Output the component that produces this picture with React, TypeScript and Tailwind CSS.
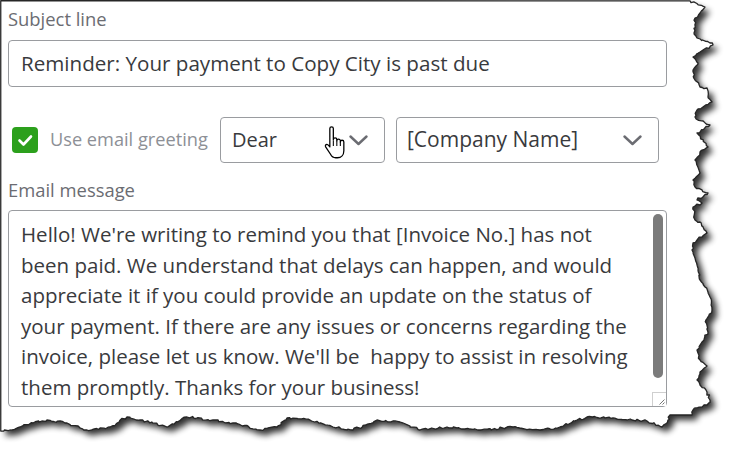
import React from "react";

type P = [number, number];

function makeRng(seed: number) {
  let s = seed;
  return () => {
    s = (s * 16807) % 2147483647;
    return (s - 1) / 2147483646;
  };
}

const rightPts: P[] = [
  [690, 0.75], [705, 7], [700, 13], [695, 18], [694, 33], [697, 38], [710, 43], [713, 45],
  [700, 52], [693, 57], [698, 63], [693, 70], [695, 80], [700, 87], [707, 88], [708, 97],
  [712, 102], [697, 110], [695, 117], [710, 125], [697, 133], [708, 147], [700, 152],
  [695, 160], [700, 173], [693, 180], [695, 187], [708, 193], [697, 200], [702, 203],
  [693, 207], [695, 220], [700, 222], [707, 233], [702, 237], [693, 243], [692, 250],
  [695, 258], [698, 270], [700, 280], [705, 287], [710, 297], [712, 310], [706, 320],
  [708, 332], [702, 342], [697, 350], [700, 360], [707, 366], [700, 372], [697, 380],
  [700, 385], [707, 392], [710, 400], [707, 405], [693, 410], [692, 415],
];

const bottomPts: P[] = [
  [692, 415], [670, 415], [668, 420], [662, 427], [647, 421], [613, 418], [587, 417],
  [577, 420], [560, 427], [540, 430], [513, 427], [480, 430], [447, 427], [420, 430],
  [400, 422], [377, 420], [353, 430], [333, 427], [310, 420], [287, 418], [277, 427],
  [260, 430], [233, 423], [213, 420], [187, 417], [167, 427], [140, 420], [127, 417],
  [110, 427], [87, 430], [67, 423], [47, 420], [33, 423], [20, 427], [10, 430], [0.75, 431],
];

function jagged(points: P[], seed: number) {
  const r = makeRng(seed);
  const out: string[] = [];
  for (let i = 0; i < points.length - 1; i++) {
    const [x1, y1] = points[i];
    const [x2, y2] = points[i + 1];
    const d = Math.hypot(x2 - x1, y2 - y1);
    const n = Math.max(1, Math.ceil(d / 2.5));
    for (let k = 0; k < n; k++) {
      const t = k / n;
      const jx = k === 0 ? 0 : (r() - 0.5) * 2.2;
      const jy = k === 0 ? 0 : (r() - 0.5) * 2.2;
      out.push(`L${(x1 + (x2 - x1) * t + jx).toFixed(1)} ${(y1 + (y2 - y1) * t + jy).toFixed(1)}`);
    }
  }
  const last = points[points.length - 1];
  out.push(`L${last[0]} ${last[1]}`);
  return out.join(" ");
}

const paperPath =
  `M0.75 0.75 ` + jagged(rightPts, 7) + " " + jagged(bottomPts.slice(1), 13) + ` Z`;

function TornPaper() {
  return (
    <svg
      className="absolute inset-0"
      width={736}
      height={461}
      viewBox="0 0 736 461"
    >
      <defs>
        <filter id="tornShadow" x="-10%" y="-10%" width="120%" height="120%">
          <feGaussianBlur stdDeviation="3.4" />
        </filter>
      </defs>
      <path d={paperPath} fill="#000" opacity={0.8} transform="translate(5 5)" filter="url(#tornShadow)" />
      <path d={paperPath} fill="#fff" stroke="#262626" strokeWidth={1.3} strokeLinejoin="round" />
    </svg>
  );
}

function Chevron() {
  return (
    <svg width="19" height="11" viewBox="0 0 19 11" fill="none">
      <path d="M1.5 1.5 L9.5 9 L17.5 1.5" stroke="#6b6c72" strokeWidth="2.4" strokeLinecap="round" strokeLinejoin="round" />
    </svg>
  );
}

function HandCursor() {
  return (
    <svg width="21" height="34" viewBox="0 0 18 29" fill="none">
      <path
        d="M5 3 a1.5 1.5 0 0 1 3 0 V12.5 a1.5 1.5 0 0 1 3 0 V13.5 a1.5 1.5 0 0 1 3 0 V14.5 a1.5 1.5 0 0 1 3 0 V22 c0 3.5 -2.2 6 -5.5 6 H10 c-2.2 0 -3.4 -1 -4.4 -3 L1.4 18.6 c-0.6 -1.1 0.1 -2.1 1.1 -2.1 c0.8 0 1.3 0.5 2.5 2.2 Z"
        fill="#fff"
        stroke="#000"
        strokeWidth="1.1"
        strokeLinejoin="round"
      />
      <path d="M8 13 V18 M11 13.5 V18 M14 14.5 V18" stroke="#000" strokeWidth="0.9" />
    </svg>
  );
}

const lines = [
  "Hello! We're writing to remind you that [Invoice No.] has not",
  "been paid. We understand that delays can happen, and would",
  "appreciate it if you could provide an update on the status of",
  "your payment. If there are any issues or concerns regarding the",
  "invoice, please let us know. We'll be  happy to assist in resolving",
  "them promptly. Thanks for your business!",
];

export default function App() {
  return (
    <div
      className="relative w-[736px] h-[461px] bg-white overflow-hidden"
      style={{ fontFamily: "'Open Sans', Lato, sans-serif" }}
    >
      <TornPaper />
      <div className="relative ml-[8px] w-[659px] flex flex-col">
        <div className="h-[40px] pt-[7px] text-[18.4px] leading-[24px] text-[#6b6c72]">Subject line</div>
        <div className="h-[47px] rounded-[4px] border border-[#9a9ca0] flex items-center pl-[12px] text-[20.6px] text-[#393a3d]">
          Reminder: Your payment to Copy City is past due
        </div>
        <div className="mt-[30px] h-[46px] flex items-center">
          <div className="w-[212px] flex items-center">
            <div className="ml-[4px] w-[26px] h-[26px] rounded-[4px] bg-[#2ca01c] flex items-center justify-center">
              <svg width="26" height="26" viewBox="0 0 26 26" fill="none">
                <path d="M7.5 13.5 L11.5 17.5 L19 9.5" stroke="#fff" strokeWidth="2.6" strokeLinecap="round" strokeLinejoin="round" />
              </svg>
            </div>
            <span className="ml-[12px] text-[18.2px] text-[#8d9096] whitespace-nowrap">Use email greeting</span>
          </div>
          <div className="w-[165px] h-[46px] rounded-[4px] border border-[#9a9ca0] flex items-center pl-[11px] pr-[16px]">
            <span className="flex-1 text-[20px] text-[#393a3d]">Dear</span>
            <span className="mr-[4px] mt-[4px]"><HandCursor /></span>
            <Chevron />
          </div>
          <div className="ml-[11px] w-[263px] h-[46px] rounded-[4px] border border-[#9a9ca0] flex items-center pl-[10px] pr-[16px]">
            <span className="flex-1 text-[21px] text-[#393a3d]">[Company Name]</span>
            <Chevron />
          </div>
        </div>
        <div className="h-[47px] pt-[15px] text-[18.4px] leading-[24px] text-[#6b6c72]">Email message</div>
        <div className="relative h-[197px] rounded-[4px] border border-[#9a9ca0] flex">
          <div className="flex-1 pl-[12px] pt-[8px] text-[20.5px] leading-[30.6px] text-[#393a3d] overflow-hidden">
            {lines.map((l, i) => (
              <div key={i} className="whitespace-pre">{l}</div>
            ))}
          </div>
          <div className="w-[13px] pt-[3px]">
            <div className="w-[10px] h-[164px] rounded-full bg-[#7b7b7b]" />
          </div>
          <div className="absolute right-0 bottom-0 w-[14px] h-[14px] bg-white border-l border-t border-[#cfcfcf]">
            <svg width="13" height="13" viewBox="0 0 13 13">
              <path d="M11.5 6.5 L6.5 11.5 M11.5 9.5 L9.5 11.5" stroke="#777" strokeWidth="1" />
            </svg>
          </div>
        </div>
      </div>
    </div>
  );
}
